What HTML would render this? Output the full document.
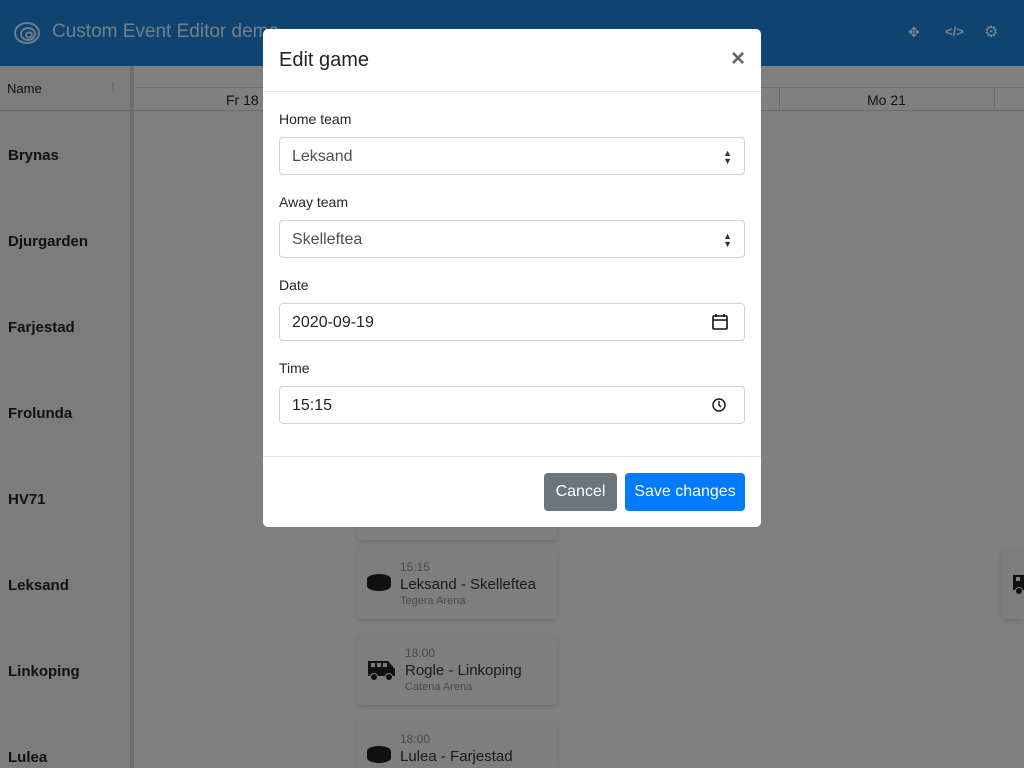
<!DOCTYPE html>
<html style="width:1024px;height:768px;overflow:hidden"><head><meta charset="utf-8"><style>
*{box-sizing:border-box;margin:0;padding:0}
body{width:1024px;height:768px;overflow:hidden;position:relative;font-family:"Liberation Sans",sans-serif;background:#808080;color:#111}
.hdr{position:absolute;left:0;top:0;width:1024px;height:66px;background:#0f4470}
.hdr .t{position:absolute;left:52px;top:21px;font-size:19px;color:#777f88}
.side{position:absolute;left:0;top:66px;width:134px;height:702px;background:#7c7c7c;border-right:4px solid #6e6e6e}
.row{position:absolute;left:8px;font-size:15px;font-weight:bold;color:#111}
.hline{position:absolute;height:1px;background:#6a6a6a}
.card{position:absolute;left:357px;width:200px;height:70px;background:#7e7e7e;border-radius:4px;box-shadow:0 2px 6px rgba(0,0,0,.15)}
.card .a{position:absolute;top:11px;font-size:12px;color:#4a4a4a}
.card .b{position:absolute;top:27px;font-size:15px;color:#1a1a1a}
.card .c{position:absolute;top:46px;font-size:11px;color:#4a4a4a}
.modal{position:absolute;left:263px;top:29px;width:498px;height:498px;background:#fff;border-radius:5px}
.mh{height:63px;border-bottom:1px solid #dee2e6;position:relative}
.mh h5{position:absolute;left:16px;top:20px;font-size:20px;font-weight:normal;color:#212529}
.mh .x{position:absolute;right:16px;top:16px;font-size:24px;color:#666;font-weight:bold}
.lbl{position:absolute;left:16px;font-size:14px;color:#212529}
.inp{position:absolute;left:16px;width:466px;height:38px;border:1px solid #ced4da;border-radius:4px;font-size:16px;color:#495057;padding:0 12px;line-height:37px}
.ft{position:absolute;left:0;top:427px;width:100%;border-top:1px solid #dee2e6}
.btn{position:absolute;top:444px;height:38px;border-radius:4px;color:#fff;font-size:16px;text-align:center;line-height:38px}
</style></head><body>
<div class="hdr">
<svg style="position:absolute;left:13px;top:18px" width="28" height="28" viewBox="0 0 28 28" fill="none" stroke="#6f7c8a" stroke-width="2"><ellipse cx="14" cy="15" rx="12" ry="10"/><ellipse cx="15" cy="16" rx="7" ry="6"/><ellipse cx="16" cy="17" rx="3" ry="2.5"/></svg>
<div class="t">Custom Event Editor demo</div>
<div style="position:absolute;left:908px;top:24px;color:#7a8694;font-size:14px">✥</div>
<div style="position:absolute;left:945px;top:24px;color:#7a8694;font-size:13px;font-weight:bold">&lt;/&gt;</div>
<div style="position:absolute;left:984px;top:22px;color:#7a8694;font-size:16px">⚙</div>
</div>
<div class="side"></div>
<div style="position:absolute;left:7px;top:81px;font-size:13px">Name</div>
<div style="position:absolute;left:109px;top:78px;font-size:15px;color:#666;font-weight:bold">↑</div>
<div class="hline" style="left:0;top:110px;width:1024px"></div>
<div class="hline" style="left:135px;top:87px;width:889px"></div>
<div style="position:absolute;left:226px;top:92px;font-size:14px">Fr 18</div>
<div style="position:absolute;left:867px;top:92px;font-size:14px">Mo 21</div>
<div style="position:absolute;left:779px;top:88px;width:1px;height:22px;background:#6a6a6a"></div>
<div style="position:absolute;left:994px;top:88px;width:1px;height:22px;background:#6a6a6a"></div>
<div class="row" style="top:147px">Brynas</div>
<div class="row" style="top:233px">Djurgarden</div>
<div class="row" style="top:319px">Farjestad</div>
<div class="row" style="top:405px">Frolunda</div>
<div class="row" style="top:491px">HV71</div>
<div class="row" style="top:577px">Leksand</div>
<div class="row" style="top:663px">Linkoping</div>
<div class="row" style="top:749px">Lulea</div>
<div class="card" style="top:470px"></div>
<div class="card" style="top:549px"><svg style="position:absolute;left:10px;top:25px" width="24" height="18"><ellipse cx="12" cy="12" rx="12" ry="5" fill="#111"/><rect x="0" y="5" width="24" height="7" fill="#111"/><ellipse cx="12" cy="5" rx="12" ry="5" fill="#111"/></svg><div class="a" style="left:43px">15:15</div><div class="b" style="left:43px">Leksand - Skelleftea</div><div class="c" style="left:43px">Tegera Arena</div></div>
<div class="card" style="top:635px"><svg style="position:absolute;left:10px;top:24px" width="30" height="22"><path d="M1 2h20l7 8v7H1z" fill="#111"/><circle cx="7" cy="18" r="3.5" fill="#111" stroke="#7e7e7e"/><circle cx="22" cy="18" r="3.5" fill="#111" stroke="#7e7e7e"/><rect x="4" y="4" width="4" height="4" fill="#7e7e7e"/><rect x="10" y="4" width="4" height="4" fill="#7e7e7e"/><rect x="16" y="4" width="4" height="4" fill="#7e7e7e"/></svg><div class="a" style="left:48px">18:00</div><div class="b" style="left:48px">Rogle - Linkoping</div><div class="c" style="left:48px">Catena Arena</div></div>
<div class="card" style="top:721px;height:47px;border-radius:4px 4px 0 0"><svg style="position:absolute;left:10px;top:25px" width="24" height="18"><ellipse cx="12" cy="12" rx="12" ry="5" fill="#111"/><rect x="0" y="5" width="24" height="7" fill="#111"/><ellipse cx="12" cy="5" rx="12" ry="5" fill="#111"/></svg><div class="a" style="left:43px">18:00</div><div class="b" style="left:43px">Lulea - Farjestad</div></div>
<div class="card" style="left:1002px;top:549px;width:22px;border-radius:4px 0 0 4px"><svg style="position:absolute;left:10px;top:24px" width="12" height="22"><path d="M1 2h20l7 8v7H1z" fill="#111"/><circle cx="7" cy="18" r="3.5" fill="#111" stroke="#7e7e7e"/><rect x="4" y="4" width="4" height="4" fill="#7e7e7e"/></svg></div>
<div class="modal">
<div class="mh"><h5>Edit game</h5><div class="x">×</div></div>
<div class="lbl" style="top:82px">Home team</div>
<div class="inp" style="top:108px">Leksand<span style="position:absolute;right:12px;top:11px;font-size:9px;line-height:8px;color:#333">▲<br>▼</span></div>
<div class="lbl" style="top:165px">Away team</div>
<div class="inp" style="top:191px">Skelleftea<span style="position:absolute;right:12px;top:11px;font-size:9px;line-height:8px;color:#333">▲<br>▼</span></div>
<div class="lbl" style="top:248px">Date</div>
<div class="inp" style="top:274px;color:#212529">2020-09-19<svg style="position:absolute;right:16px;top:10px" width="16" height="16" fill="none" stroke="#111" stroke-width="1.6"><rect x="1" y="2" width="14" height="13" rx="1"/><path d="M1 6h14M4 0v3M12 0v3"/></svg></div>
<div class="lbl" style="top:331px">Time</div>
<div class="inp" style="top:357px;color:#212529">15:15<svg style="position:absolute;right:18px;top:11px" width="14" height="14" fill="none" stroke="#111" stroke-width="1.4"><circle cx="7" cy="7" r="6"/><path d="M7 3v4l2 2"/></svg></div>
<div class="ft"></div>
<div class="btn" style="left:281px;width:73px;background:#6c757d">Cancel</div>
<div class="btn" style="left:362px;width:120px;background:#007bff">Save changes</div>
</div>
</body></html>
